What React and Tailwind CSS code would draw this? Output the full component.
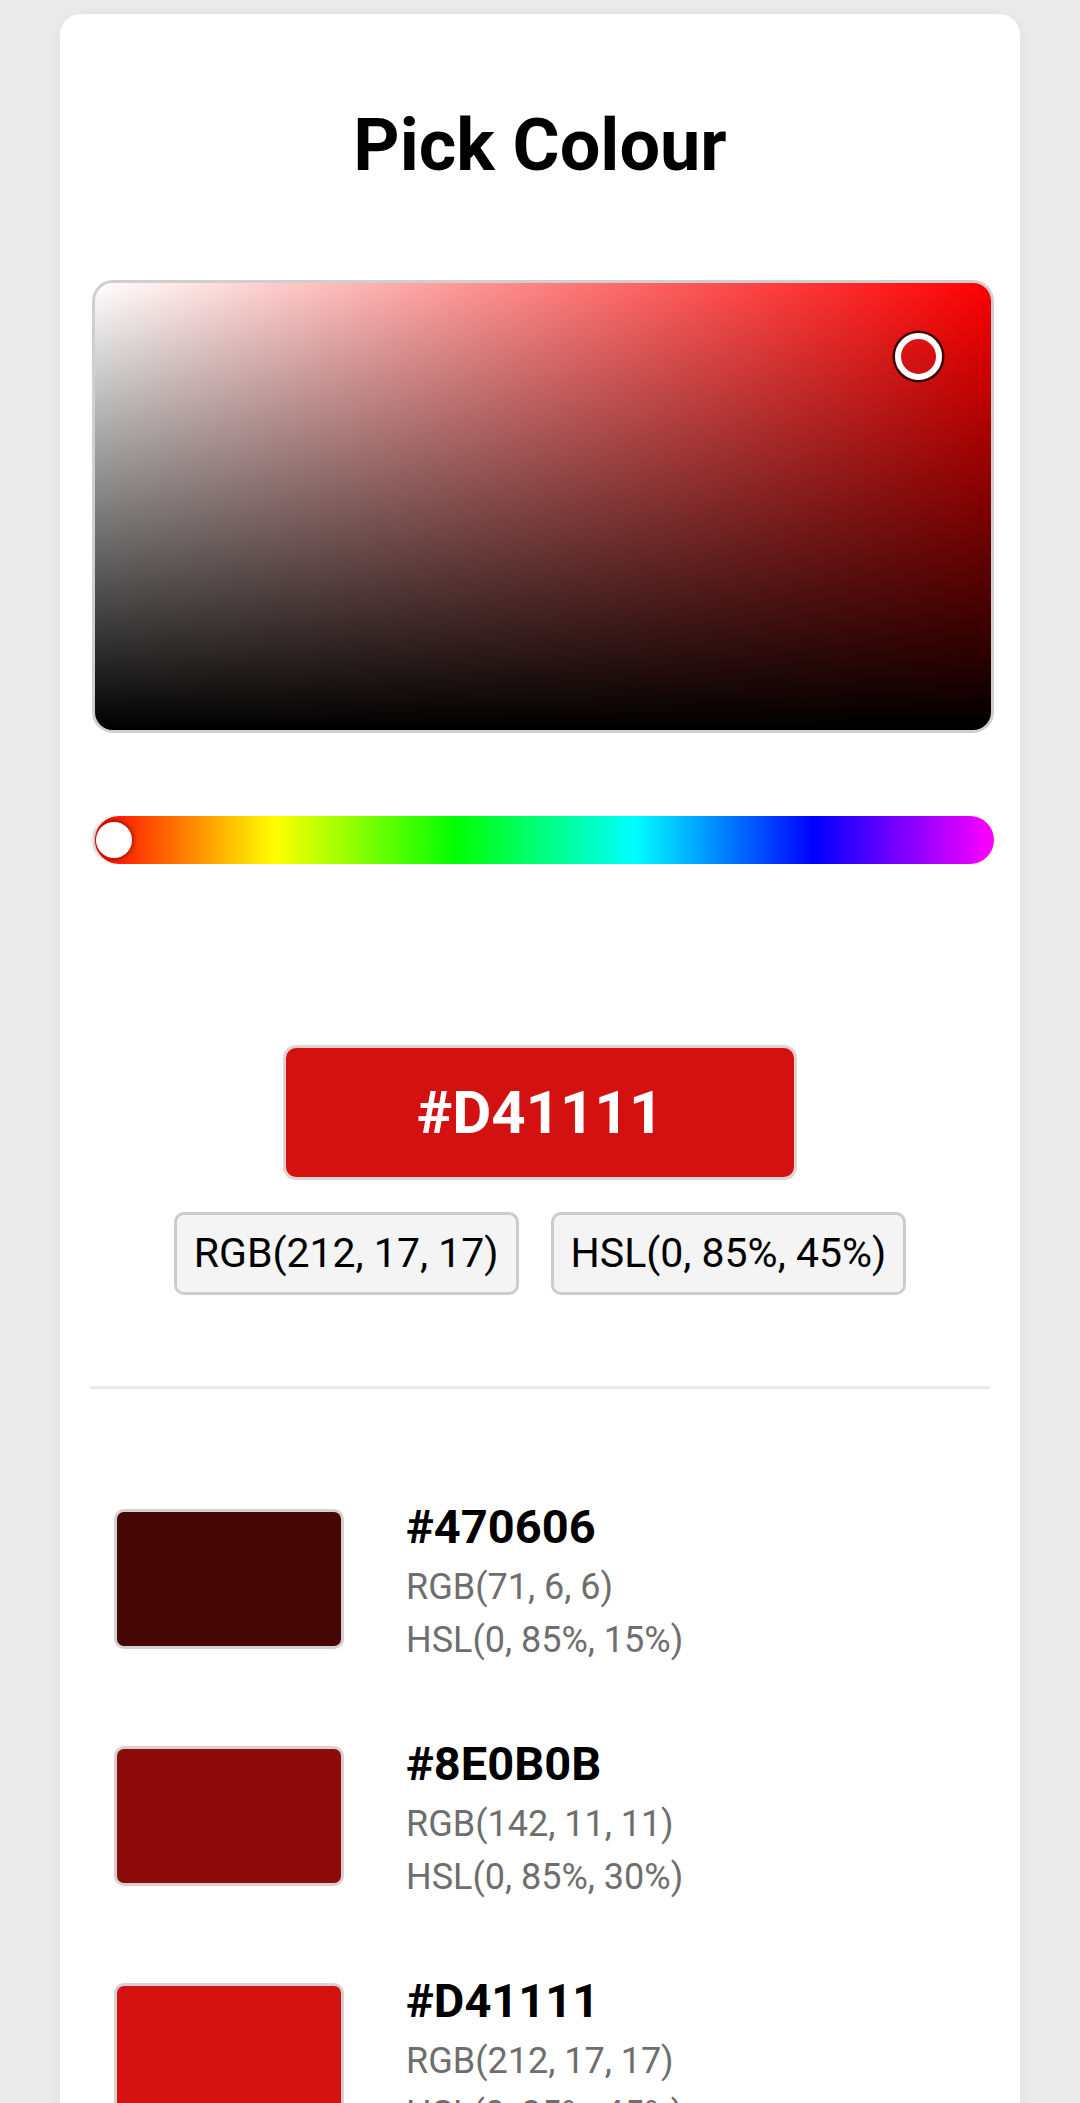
export default function App() {
  const rows = [
    { hex: "#470606", color: "bg-[#470606]", rgb: "RGB(71, 6, 6)", hsl: "HSL(0, 85%, 15%)" },
    { hex: "#8E0B0B", color: "bg-[#8E0B0B]", rgb: "RGB(142, 11, 11)", hsl: "HSL(0, 85%, 30%)" },
    { hex: "#D41111", color: "bg-[#D41111]", rgb: "RGB(212, 17, 17)", hsl: "HSL(0, 85%, 45%)" },
  ];
  return (
    <div className="min-h-screen bg-[#ebebeb] px-[60px] pt-[14px] font-['Roboto',sans-serif] text-black overflow-hidden">
      <div className="bg-white rounded-[21px] pl-[32px] pr-[26px] pt-[89px] pb-[120px] shadow-[0_2px_16px_rgba(0,0,0,0.06)]">
        <h1 className="-ml-[6px] text-center text-[72px] font-bold leading-[86px]">Pick Colour</h1>

        <div className="relative mt-[91px] h-[453px] rounded-[21px] border-[3px] border-[#cfcfcf] bg-[linear-gradient(to_bottom,rgba(0,0,0,0),#000),linear-gradient(to_right,#fff,#f00)]">
          <div className="absolute left-[800px] top-[50px] w-[47px] h-[47px] rounded-full border-[6px] border-white shadow-[0_0_0_2.5px_#3a0505] bg-transparent"></div>
        </div>

        <div className="relative mt-[83px] ml-[3px] h-[48px] rounded-full bg-[linear-gradient(to_right,#f00,#ff0,#0f0,#0ff,#00f,#f0f)]">
          <div className="absolute left-[1px] top-[6px] w-[36px] h-[36px] rounded-full bg-white shadow-[0_0_6px_rgba(90,0,0,0.9)]"></div>
        </div>

        <div className="-ml-[6px]">
          <div className="mt-[181px] mx-auto w-[514px] h-[135px] rounded-[13px] border-[3px] border-[#e2d2d2] bg-[#D41111] flex items-center justify-center">
            <span className="text-white text-[60px] font-bold leading-none">#D41111</span>
          </div>

          <div className="mt-[32px] flex justify-center gap-[32px]">
            <div className="h-[83px] px-[17px] rounded-[10px] border-[3px] border-[#cccccc] bg-[#f4f4f4] flex items-center text-[41px] leading-none">RGB(212, 17, 17)</div>
            <div className="h-[83px] px-[17px] rounded-[10px] border-[3px] border-[#cccccc] bg-[#f4f4f4] flex items-center text-[41px] leading-none">HSL(0, 85%, 45%)</div>
          </div>
        </div>

        <div className="mt-[91px] -ml-[2px] mr-[4px] h-[3px] bg-[#ebebeb]"></div>

        <div className="mt-[120px] flex flex-col gap-[97px]">
          {rows.map((r) => (
            <div key={r.hex} className="flex items-start h-[140px]">
              <div className={`ml-[22px] w-[230px] h-[140px] shrink-0 rounded-[10px] border-[3px] border-[#d6d0d0] ${r.color}`}></div>
              <div className="ml-[62px] -mt-[10px] flex flex-col">
                <div className="text-[47px] font-bold leading-[56px]">{r.hex}</div>
                <div className="mt-[6px] text-[36px] leading-[53px] text-[#6e6e6e]">{r.rgb}</div>
                <div className="text-[36px] leading-[53px] text-[#6e6e6e]">{r.hsl}</div>
              </div>
            </div>
          ))}
        </div>
      </div>
    </div>
  );
}
